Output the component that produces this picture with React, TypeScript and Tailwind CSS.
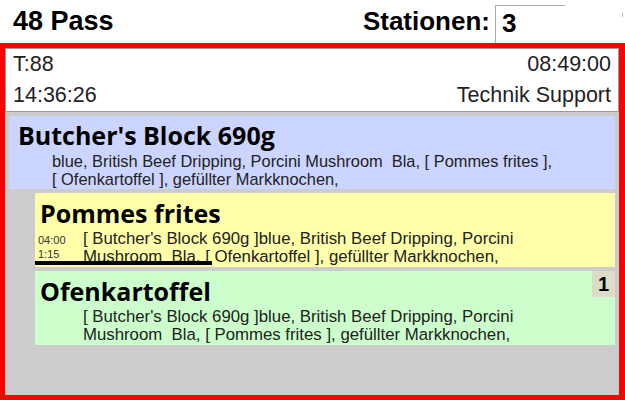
import React from 'react'

interface Item {
    title: string
    lines: string[]
    color: string
    times?: string[]
    badge?: string
    timerWidth?: number
}

const items: Item[] = [
    {
        title: 'Pommes frites',
        lines: [
            "[ Butcher's Block 690g ]blue, British Beef Dripping, Porcini",
            'Mushroom  Bla, [ Ofenkartoffel ], gefüllter Markknochen,',
        ],
        color: 'bg-[#ffffaa]',
        times: ['04:00', '1:15'],
        timerWidth: 177,
    },
    {
        title: 'Ofenkartoffel',
        lines: [
            "[ Butcher's Block 690g ]blue, British Beef Dripping, Porcini",
            'Mushroom  Bla, [ Pommes frites ], gefüllter Markknochen,',
        ],
        color: 'bg-[#ccffcc]',
        badge: '1',
    },
]

function SubItem({ item }: { item: Item }) {
    return (
        <div className={`relative ${item.color} pl-[5px] pb-[1px] pt-[3px]`}>
            {item.badge && (
                <div className="absolute right-0 top-0 w-[23px] h-[26px] bg-[#dcdcc8] text-[20px] font-bold text-center leading-[26px]">
                    {item.badge}
                </div>
            )}
            <div className="text-[25px] font-bold leading-[34px] font-['Open_Sans',sans-serif]">{item.title}</div>
            <div className="flex">
                <div className="w-[43px] shrink-0 text-[11px] leading-[14px] pt-[3px] text-[#333]">
                    {item.times?.map((t) => (
                        <div key={t} className="-ml-[2px]">{t}</div>
                    ))}
                </div>
                <div className="text-[16.8px] leading-[18px] text-[#222]">
                    {item.lines.map((l) => (
                        <div key={l} className="whitespace-pre">{l}</div>
                    ))}
                </div>
            </div>
            {item.timerWidth && (
                <div className="absolute left-0 bottom-[2px] h-[4px] bg-black" style={{ width: item.timerWidth }} />
            )}
        </div>
    )
}

export default function App() {
    return (
        <div className="relative w-[625px] h-[400px] overflow-hidden bg-white font-['Liberation_Sans',Arial,sans-serif] text-black">
            {/* top bar */}
            <div className="h-[43px] flex items-center px-[13px]">
                <div className="text-[27px] font-bold">48 Pass</div>
                <div className="ml-auto flex items-center mr-[47px] self-stretch">
                    <span className="text-[26px] font-bold">Stationen:</span>
                    <div className="ml-[5px] w-[70px] self-stretch mt-[5px] border-l border-t border-[#a8a8a8] text-[26px] font-bold pl-[6px] leading-[34px]">
                        3
                    </div>
                </div>
            </div>
            <div className="absolute left-[622px] top-[13px] w-[1px] h-[4px] bg-[#bbb]" />

            {/* ticket */}
            <div className="h-[357px] border-[5px] border-[#ff0000] border-r-[6px] flex flex-col bg-[#cccccc]">
                <div className="bg-white border border-[#999] px-[7px] text-[21.5px] leading-[31px] text-[#222]">
                    <div className="flex justify-between">
                        <span>T:88</span>
                        <span>08:49:00</span>
                    </div>
                    <div className="flex justify-between">
                        <span>14:36:26</span>
                        <span>Technik Support</span>
                    </div>
                </div>

                <div className="px-[4px] pt-[4px] flex flex-col gap-[4px]">
                    <div className="bg-[#ccd5ff] pl-[9px] pt-[2px] pb-[1px]">
                        <div className="text-[25px] font-bold leading-[34px] font-['Open_Sans',sans-serif]">Butcher's Block 690g</div>
                        <div className="pl-[34px] text-[16.4px] leading-[18px] text-[#222]">
                            <div className="whitespace-pre">blue, British Beef Dripping, Porcini Mushroom  Bla, [ Pommes frites ],</div>
                            <div>[ Ofenkartoffel ], gefüllter Markknochen,</div>
                        </div>
                    </div>
                    <div className="pl-[26px] flex flex-col gap-[4px]">
                        {items.map((it) => (
                            <SubItem key={it.title} item={it} />
                        ))}
                    </div>
                </div>
            </div>
        </div>
    )
}
